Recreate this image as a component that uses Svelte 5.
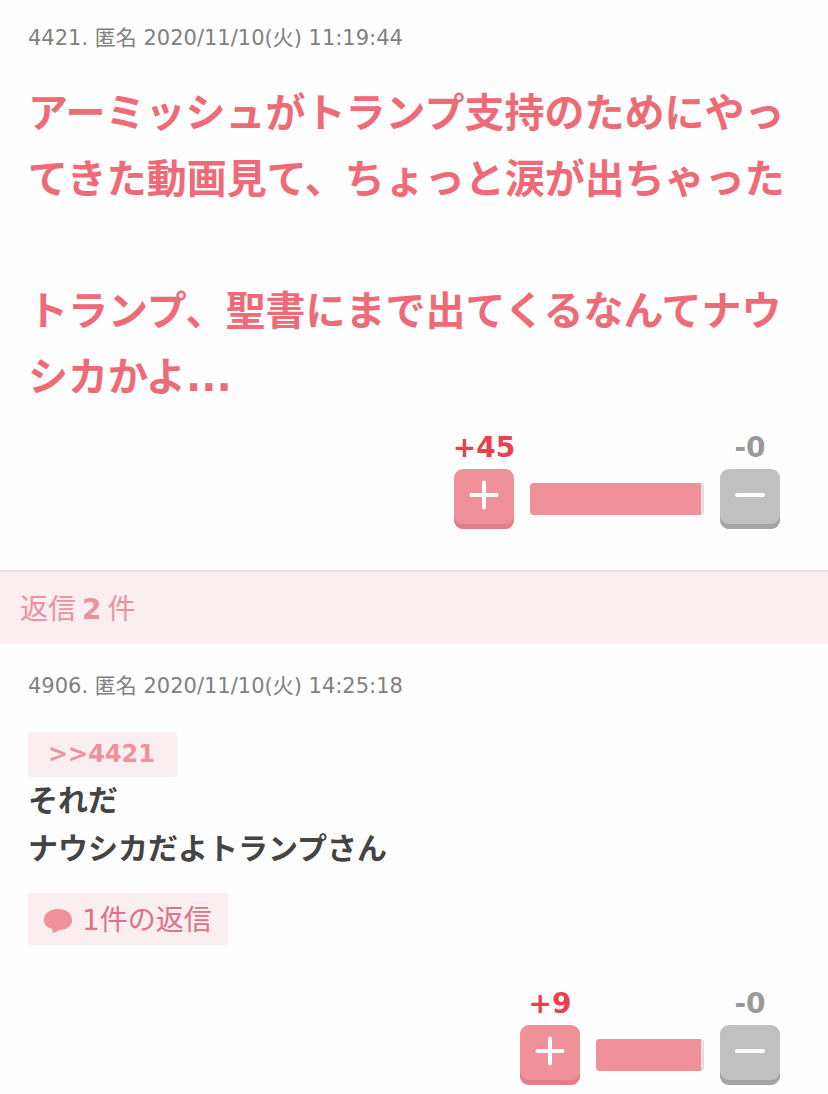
<script>
  const topic = {
    id: 4421,
    name: "匿名",
    date: "2020/11/10(火) 11:19:44",
    body: "アーミッシュがトランプ支持のためにやってきた動画見て、ちょっと涙が出ちゃった\n\nトランプ、聖書にまで出てくるなんてナウシカかよ...",
    plus: 45,
    minus: 0,
    barWidth: 174,
  };

  const reply = {
    id: 4906,
    name: "匿名",
    date: "2020/11/10(火) 14:25:18",
    body: "それだ\nナウシカだよトランプさん",
    plus: 9,
    minus: 0,
    barWidth: 108,
  };
</script>

{#snippet meta(comment)}
  <p class="meta">{comment.id}. {comment.name} {comment.date}</p>
{/snippet}

{#snippet votes(comment)}
  <div class="votes">
    <div class="vote">
      <span class="count plus-count">+{comment.plus}</span>
      <button class="vote-button plus" aria-label="プラス">
        <svg viewBox="0 0 30 30" aria-hidden="true">
          <path d="M2.500 15h25M15 2.500v25" />
        </svg>
      </button>
    </div>
    <div class="bar" style="width: {comment.barWidth}px">
      <div class="bar-fill"></div>
    </div>
    <div class="vote">
      <span class="count minus-count">-{comment.minus}</span>
      <button class="vote-button minus" aria-label="マイナス">
        <svg viewBox="0 0 30 30" aria-hidden="true">
          <path d="M2 15h26" />
        </svg>
      </button>
    </div>
  </div>
{/snippet}

<main>
  <article class="comment" id="comment-4421">
    {@render meta(topic)}
    <p class="body large">{topic.body}</p>
    {@render votes(topic)}
  </article>

  <h2 class="reply-heading">
    <span>返信</span>
    <strong>2</strong>
    <span>件</span>
  </h2>

  <article class="comment reply" id="replies">
    {@render meta(reply)}
    <a class="anchor" href="#comment-4421">&gt;&gt;4421</a>
    <p class="body">{reply.body}</p>
    <a class="reply-link" href="#replies">
      <svg viewBox="0 0 28 24" aria-hidden="true">
        <path
          d="M14 0C6 0 0 4 0 11c0 4.500 3 7.500 8 9 .8 1.200.8 2.500.5 4 3-.8 5-1.500 6.500-3C23 21 28 17 28 11 28 4 22 0 14 0z"
        />
      </svg>
      <span>1件の返信</span>
    </a>
    {@render votes(reply)}
  </article>
</main>

<style>
  :global(body) {
    margin: 0;
    background: #fefefe;
  }

  main {
    font-family: Verdana, "DejaVu Sans", "Noto Sans CJK JP", sans-serif;
    color: #444;
  }

  .comment {
    padding: 23px 32px 41px 28px;
  }

  .comment.reply {
    padding-top: 27px;
    padding-bottom: 8px;
  }

  .meta {
    margin: 0;
    font-size: 21px;
    line-height: 30px;
    color: #808080;
  }

  .body {
    margin: 0;
    font-size: 30px;
    font-weight: bold;
    line-height: 48px;
    white-space: pre-line;
  }

  .body.large {
    margin: 27px 0 19px;
    font-size: 40px;
    line-height: 66px;
    color: #ee6a77;
  }

  .votes {
    display: flex;
    justify-content: flex-end;
    align-items: flex-end;
    gap: 16px;
    padding-right: 16px;
  }

  .vote {
    display: flex;
    flex-direction: column;
    align-items: center;
    gap: 2px;
    width: 60px;
  }

  .count {
    font-size: 28px;
    font-weight: bold;
    line-height: 38px;
    white-space: nowrap;
  }

  .plus-count {
    color: #e8404c;
  }

  .minus-count {
    color: #999;
  }

  .vote-button {
    display: flex;
    justify-content: center;
    width: 60px;
    height: 60px;
    padding: 11px 0 0;
    border: none;
    border-radius: 9px;
    cursor: pointer;
  }

  .vote-button svg {
    width: 30px;
    height: 30px;
    fill: none;
    stroke: #fff;
    stroke-width: 4;
    stroke-linecap: round;
  }

  .plus {
    background: #f09098;
    box-shadow: inset 0 -5px #df7f88;
  }

  .minus {
    background: #c0c0c0;
    box-shadow: inset 0 -5px #a4a4a4;
  }

  .bar {
    box-sizing: border-box;
    height: 32px;
    margin-bottom: 14px;
    padding-right: 3px;
    border-radius: 4px;
    background: #e4dfe0;
    overflow: hidden;
  }

  .bar-fill {
    height: 100%;
    background: #f09098;
  }

  .reply-heading {
    display: flex;
    align-items: baseline;
    gap: 6px;
    margin: 0;
    padding: 18px 20px 14px;
    border-top: 2px solid #e6e4e5;
    background: #faeef1;
    font-size: 28px;
    font-weight: normal;
    line-height: 40px;
    color: #ec929e;
  }

  .anchor {
    display: block;
    width: fit-content;
    margin-top: 31px;
    padding: 0 22px 0 20px;
    border-radius: 2px;
    background: #faeef1;
    font-size: 24px;
    font-weight: bold;
    line-height: 45px;
    color: #ef929e;
    text-decoration: none;
  }

  .reply-link {
    display: flex;
    align-items: center;
    gap: 10px;
    width: fit-content;
    margin: 20px 0 40px;
    padding: 4px 16px 0;
    border-radius: 2px;
    background: #faeef1;
    font-size: 28px;
    line-height: 48px;
    color: #dd7185;
    text-decoration: none;
  }

  .reply-link svg {
    width: 28px;
    height: 24px;
    fill: #f09098;
  }
</style>
